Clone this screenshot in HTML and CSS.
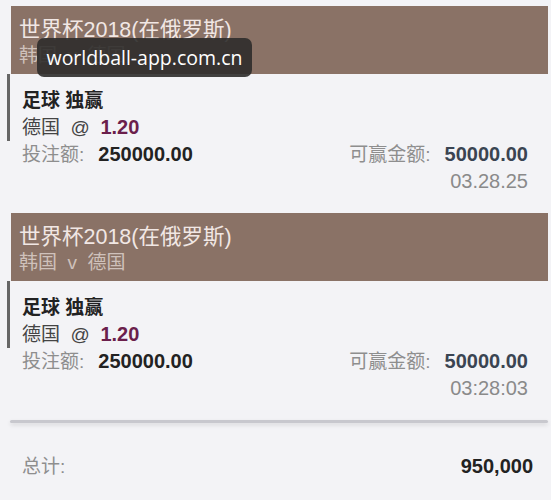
FILE: index.html
```html
<!DOCTYPE html>
<html lang="zh-CN">
<head>
  <meta charset="UTF-8">
  <meta name="viewport" content="width=device-width, initial-scale=1.0">
  <title>投注记录</title>
  <link rel="stylesheet" href="styles.css">
</head>
<body>
  <div class="bet">
    <div class="bet-head">
      <div class="event">世界杯2018(在俄罗斯)</div>
      <div class="match">韩国 &nbsp;v &nbsp;德国</div>
    </div>
    <div class="selection">
      <div class="market">足球 独赢</div>
      <div class="pick">德国 &nbsp;@ &nbsp;<span class="odds">1.20</span></div>
    </div>
    <div class="amounts">
      <span><span class="label">投注额:</span><b class="stake">250000.00</b></span>
      <span><span class="label">可赢金额:</span><b class="win">50000.00</b></span>
    </div>
    <div class="time">03.28.25</div>
  </div>

  <div class="bet">
    <div class="bet-head">
      <div class="event">世界杯2018(在俄罗斯)</div>
      <div class="match">韩国 &nbsp;v &nbsp;德国</div>
    </div>
    <div class="selection">
      <div class="market">足球 独赢</div>
      <div class="pick">德国 &nbsp;@ &nbsp;<span class="odds">1.20</span></div>
    </div>
    <div class="amounts">
      <span><span class="label">投注额:</span><b class="stake">250000.00</b></span>
      <span><span class="label">可赢金额:</span><b class="win">50000.00</b></span>
    </div>
    <div class="time">03:28:03</div>
  </div>

  <div class="divider"></div>

  <div class="total">
    <span class="label">总计:</span>
    <b>950,000</b>
  </div>

  <div class="watermark">worldball-app.com.cn</div>
</body>
</html>
```

FILE: styles.css
```css
* {
  box-sizing: border-box;
}

body {
  position: relative;
  margin: 0;
  padding: 6px 3px 0 11px;
  background: #f3f3f6;
  font-family: "Liberation Sans", "Noto Sans CJK SC", sans-serif;
  font-size: 19px;
  color: #333;
}

.bet {
  margin-bottom: 18px;
}

.bet-head {
  background: #8a7266;
  padding: 11px 0 5px 8px;
  line-height: 26px;
}

.event {
  font-size: 21.5px;
  color: #f1e7e4;
}

.match {
  font-size: 19px;
  color: #cfc1bb;
}

.selection {
  margin-left: -4px;
  border-left: 3px solid #666;
  padding: 13px 0 0 12px;
  line-height: 27px;
}

.market {
  font-weight: bold;
  color: #222;
}

.pick {
  color: #444;
}

.odds {
  font-size: 20px;
  font-weight: bold;
  color: #6b1f4c;
}

.amounts {
  display: flex;
  justify-content: space-between;
  padding: 0 20px 0 11px;
  line-height: 27px;
}

.label {
  color: #8e8e8e;
}

.stake,
.win {
  margin-left: 14px;
  font-size: 20px;
}

.stake {
  color: #222;
}

.win {
  color: #3a4452;
}

.time {
  text-align: right;
  padding-right: 20px;
  line-height: 27px;
  font-size: 20px;
  color: #8a8a8a;
}

.divider {
  height: 3px;
  margin: 18px 0 0 -1px;
  background: #c8c8ce;
  border-radius: 2px;
  box-shadow: 0 2px 4px rgba(0, 0, 0, 0.12);
}

.total {
  display: flex;
  justify-content: space-between;
  margin-top: 30px;
  padding: 0 15px 0 11px;
  line-height: 27px;
}

.total b {
  font-size: 20px;
  color: #222;
}

.watermark {
  position: absolute;
  left: 37px;
  top: 38px;
  width: 215px;
  height: 39px;
  border-radius: 7px;
  background: rgba(46, 44, 43, 0.9);
  color: #fff;
  font-family: "Open Sans", sans-serif;
  font-size: 19.5px;
  line-height: 39px;
  text-align: center;
}
```
